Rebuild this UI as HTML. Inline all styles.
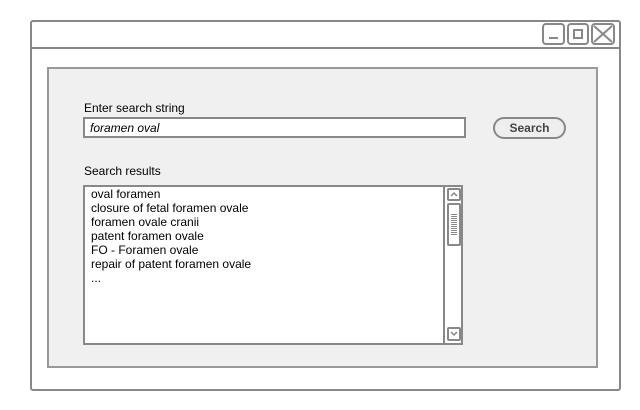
<!DOCTYPE html>
<html><head><style>
body{margin:0;width:640px;height:410px;background:#fff;position:relative;font-family:"Liberation Sans",Arial,sans-serif;font-size:12px;color:#000;overflow:hidden}
div{position:absolute;box-sizing:border-box}
.win{left:30px;top:20px;width:591px;height:371px;border:2px solid #888;border-radius:3px;background:#fff}
.tb{left:30px;top:47px;width:591px;height:2px;background:#888}
.btn{top:23px;height:22px;border:2px solid #888;border-radius:4px;background:#fff}
.panel{left:47px;top:67px;width:551px;height:301px;border:2px solid #999;background:#f0f0f0}
.lbl{left:84px;font-size:12px}
.inp{left:83px;top:117px;width:383px;height:21px;border:2px solid #888;background:#fff;font-style:italic;padding:2px 0 0 5px}
.sb{left:493px;top:117px;width:73px;height:22px;border:2px solid #888;border-radius:11px;background:#eee;font-weight:bold;text-align:center;line-height:18px;color:#444}
.list{left:83px;top:185px;width:380px;height:160px;border:2px solid #888;background:#fff;padding:0 0 0 6px;line-height:14px}
.scr{left:443px;top:185px;width:20px;height:160px;border-left:2px solid #888}
</style></head><body>
<div class="win"></div>
<div class="tb"></div>
<div class="btn" style="left:542px;width:23px"><div style="left:5px;top:12px;width:9px;height:2px;background:#888"></div></div>
<div class="btn" style="left:567px;width:22px"><div style="left:4px;top:4px;width:10px;height:10px;border:2px solid #888"></div></div>
<div class="btn" style="left:591px;width:24px"><svg width="20" height="18" style="position:absolute;left:0;top:0"><path d="M1 1L19 17M19 1L1 17" stroke="#888" stroke-width="2"/></svg></div>
<div class="panel"></div>
<div class="lbl" style="top:101px">Enter search string</div>
<div class="inp">foramen oval</div>
<div class="sb">Search</div>
<div class="lbl" style="top:164px">Search results</div>
<div class="list">oval foramen<br>closure of fetal foramen ovale<br>foramen ovale cranii<br>patent foramen ovale<br>FO - Foramen ovale<br>repair of patent foramen ovale<br>...</div>
<div class="scr">
<div style="left:2px;top:3px;width:14px;height:13px;border:2px solid #888;border-radius:2px"><svg width="10" height="9" style="position:absolute;left:0;top:0"><path d="M2 6L5 3L8 6" stroke="#888" stroke-width="1.5" fill="none"/></svg></div>
<div style="left:2px;top:18px;width:14px;height:43px;border:2px solid #888;border-radius:2px"><div style="left:2px;top:9px;width:6px;height:22px;background:repeating-linear-gradient(#888 0 1px,#fff 1px 2px)"></div></div>
<div style="left:2px;top:142px;width:14px;height:14px;border:2px solid #888;border-radius:2px"><svg width="10" height="10" style="position:absolute;left:0;top:0"><path d="M2 3L5 6L8 3" stroke="#888" stroke-width="1.5" fill="none"/></svg></div>
</div>
</body></html>
